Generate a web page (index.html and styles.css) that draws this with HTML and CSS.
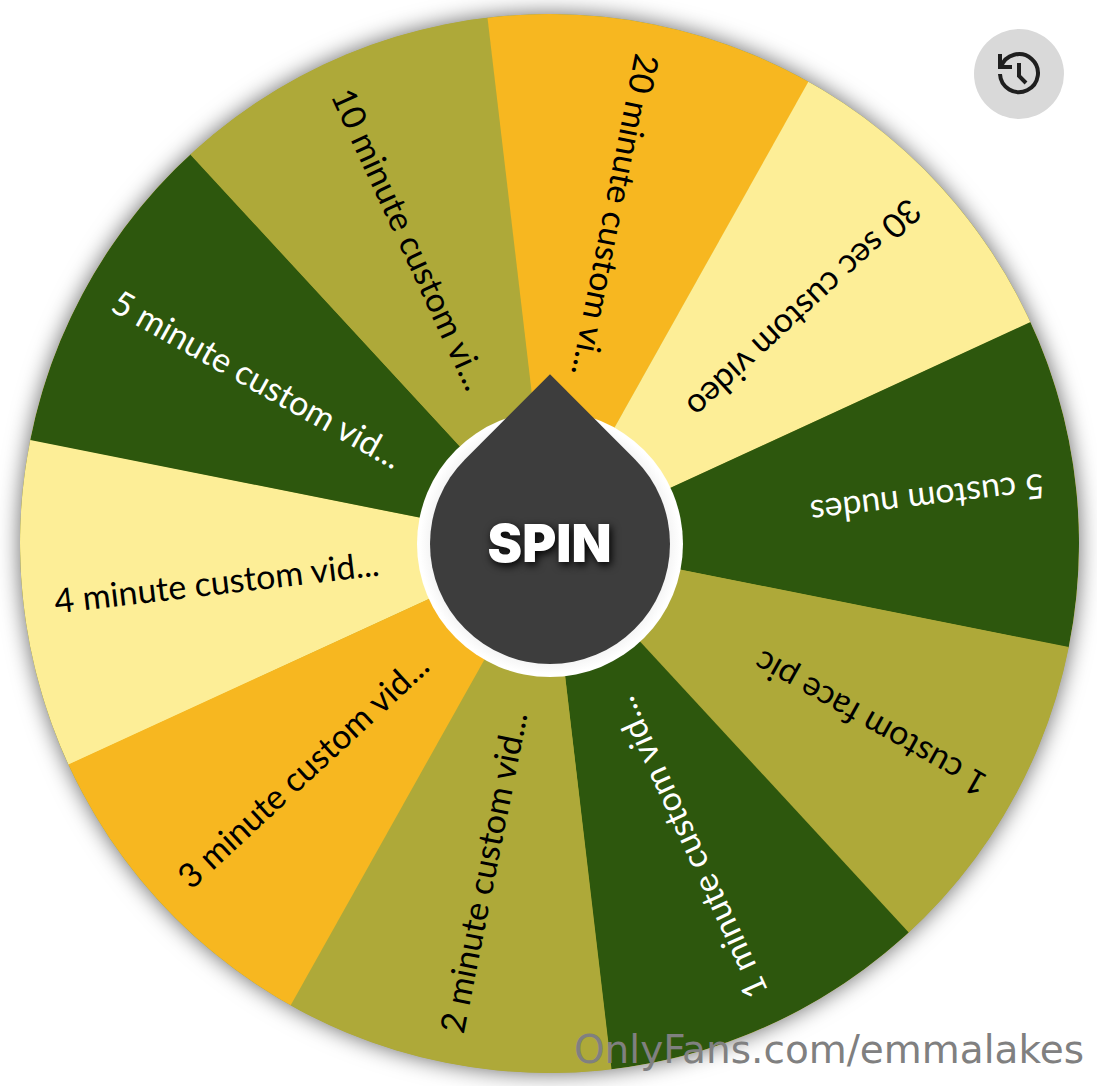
FILE: index.html
```html
<!DOCTYPE html>
<html lang="en">
<head>
<meta charset="utf-8">
<meta name="viewport" content="width=device-width, initial-scale=1">
<title>Spin the wheel</title>
<link rel="stylesheet" href="styles.css">
</head>
<body>
<main class="stage">
  <svg class="wheel" viewBox="-530 -530 1060 1060" role="img" aria-label="Prize wheel">
    <defs><path id="slice" d="M0 0L-504 164A530 530 0 0 1 -504 -164Z"/></defs>
    <g transform="rotate(-6.7)">
      <g class="cream"><use href="#slice"/><text x="-499" y="12">4 minute custom vid...</text></g>
      <g class="green" transform="rotate(36)"><use href="#slice"/><text x="-499" y="12">5 minute custom vid...</text></g>
      <g class="olive" transform="rotate(72)"><use href="#slice"/><text x="-499" y="12">10 minute custom vi...</text></g>
      <g class="amber" transform="rotate(108)"><use href="#slice"/><text x="-499" y="12">20 minute custom vi...</text></g>
      <g class="cream" transform="rotate(144)"><use href="#slice"/><text x="-499" y="12">30 sec custom video</text></g>
      <g class="green" transform="rotate(180)"><use href="#slice"/><text x="-499" y="12">5 custom nudes</text></g>
      <g class="olive" transform="rotate(216)"><use href="#slice"/><text x="-499" y="12">1 custom face pic</text></g>
      <g class="green" transform="rotate(252)"><use href="#slice"/><text x="-499" y="12">1 minute custom vid...</text></g>
      <g class="olive" transform="rotate(288)"><use href="#slice"/><text x="-499" y="12">2 minute custom vid...</text></g>
      <g class="amber" transform="rotate(324)"><use href="#slice"/><text x="-499" y="12">3 minute custom vid...</text></g>
    </g>
  </svg>
  <button class="spin" type="button"><span class="spin-label">SPIN</span></button>
  <button class="history" type="button" aria-label="History">
    <svg class="history-icon" viewBox="0 0 42 42" aria-hidden="true">
      <path d="M2 21A19 19 0 1 0 3 14M2 1V14H14M21 10V23L28 30"/>
    </svg>
  </button>
  <p class="watermark">OnlyFans.com/emmalakes</p>
</main>
</body>
</html>
```
FILE: styles.css
```css
* {
  box-sizing: border-box;
}

body {
  margin: 0;
  background: #fff;
  font-family: Lato, "Liberation Sans", sans-serif;
}

.stage {
  position: relative;
  display: grid;
  place-items: center;
  padding: 14px 18px 13px 20px;
  overflow: hidden;
}

.wheel {
  grid-area: 1 / 1;
  display: block;
  width: 100%;
  border-radius: 50%;
  background: #aea939;
  box-shadow: 0 0 22px rgba(0, 0, 0, 0.6);
}

.wheel text {
  font-size: 34px;
  fill: #000;
}

.cream {
  fill: #fdee97;
}

.green {
  fill: #2d570d;
}

.olive {
  fill: #aea939;
}

.amber {
  fill: #f7b720;
}

.wheel .green text {
  fill: #fff;
}

/* Hub: white ring with a drop-shaped pointer on top */
.spin {
  grid-area: 1 / 1;
  position: relative;
  isolation: isolate;
  display: grid;
  place-items: center;
  width: 266px;
  height: 266px;
  padding: 0;
  border: 0;
  border-radius: 50%;
  background: radial-gradient(circle closest-side, #f5f5f5 90%, #fff 98%);
  cursor: pointer;
}

.spin::before {
  content: "";
  position: absolute;
  inset: 13px;
  z-index: -1;
  border-radius: 0 50% 50% 50%;
  background: #3d3d3d;
  transform: rotate(45deg);
}

.spin-label {
  color: #fff;
  font: 900 52px/60px Inter, "Liberation Sans", sans-serif;
  text-shadow: 2px 3px 8px #000;
}

.history {
  position: absolute;
  top: 29px;
  right: 33px;
  display: grid;
  place-items: center;
  width: 90px;
  height: 90px;
  padding: 0;
  border: 0;
  border-radius: 50%;
  background: #d9d9d9;
  cursor: pointer;
}

.history-icon {
  width: 42px;
  height: 42px;
  fill: none;
  stroke: #1f1f1f;
  stroke-width: 4;
  overflow: visible;
}

.watermark {
  position: absolute;
  right: 13px;
  bottom: 12px;
  margin: 0;
  color: #808080;
  font: 39px/48px "DejaVu Sans", sans-serif;
}
```
